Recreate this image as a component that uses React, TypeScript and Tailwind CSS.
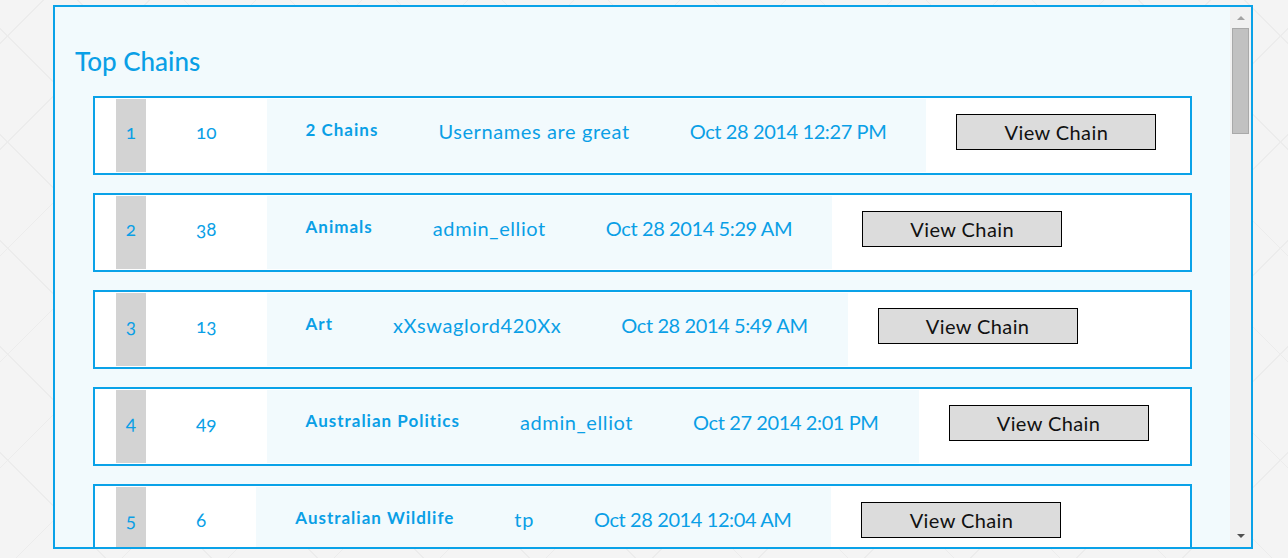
import React from 'react';

type Chain = {
  rank: number;
  links: number;
  name: string;
  author: string;
  created: string;
};

const chains: Chain[] = [
  { rank: 1, links: 10, name: '2 Chains', author: 'Usernames are great', created: 'Oct 28 2014 12:27 PM' },
  { rank: 2, links: 38, name: 'Animals', author: 'admin_elliot', created: 'Oct 28 2014 5:29 AM' },
  { rank: 3, links: 13, name: 'Art', author: 'xXswaglord420Xx', created: 'Oct 28 2014 5:49 AM' },
  { rank: 4, links: 49, name: 'Australian Politics', author: 'admin_elliot', created: 'Oct 27 2014 2:01 PM' },
  { rank: 5, links: 6, name: 'Australian Wildlife', author: 'tp', created: 'Oct 28 2014 12:04 AM' },
];

function ChainRow({ chain }: { chain: Chain }) {
  return (
    <div className="h-[79px] shrink-0 border-2 border-[#0aa2e8] bg-white pl-[21px] py-[1px] flex items-stretch text-[#0a9fe6]">
      {/* Rank */}
      <div className="w-[30px] bg-[#d3d3d3] flex items-center justify-center pb-[7px] text-[19px] [font-variant-numeric:oldstyle-nums]">
        {chain.rank}
      </div>
      {/* Links */}
      <div className="px-[50px] flex items-center justify-center pb-[7px] text-[19px] [font-variant-numeric:oldstyle-nums]">
        {chain.links}
      </div>
      {/* Details */}
      <div className="bg-[#f2fafd] flex items-stretch">
        <div className="pl-[39px] pr-[30px] flex items-center pb-[11px] text-[17px] font-bold tracking-[1px] whitespace-nowrap">
          {chain.name}
        </div>
        <div className="px-[30px] flex items-center pb-[9px] text-[20px] tracking-[0.6px] whitespace-nowrap">
          {chain.author}
        </div>
        <div className="pl-[30px] pr-[40px] flex items-center pb-[9px] text-[20px] tracking-[-0.4px] whitespace-nowrap">
          {chain.created}
        </div>
      </div>
      {/* Action */}
      <div className="pl-[30px] flex items-center pb-[8px]">
        <button className="w-[200px] h-[36px] border border-black bg-[#dcdcdc] text-[20px] tracking-[0.4px] text-[#111]">
          View Chain
        </button>
      </div>
    </div>
  );
}

export default function App() {
  return (
    <div
      className="w-[1288px] h-[558px] overflow-hidden pt-[5px] pl-[53px] bg-[#f4f4f4] bg-[repeating-linear-gradient(45deg,transparent_0,transparent_74px,#ececec_74px,#ececec_75px),repeating-linear-gradient(-45deg,transparent_0,transparent_74px,#ececec_74px,#ececec_75px)]"
      style={{ fontFamily: 'Lato, "Liberation Sans", sans-serif' }}
    >
      <div className="w-[1200px] h-[544px] border-2 border-[#0aa2e8] bg-[#f2fafd] flex">
        {/* Content */}
        <div className="flex-1 overflow-hidden">
          <h2 className="pl-[20px] pt-[39px] text-[26px] leading-[31px] font-medium text-[#0a9fe6]">Top Chains</h2>
          <div className="mt-[19px] px-[38px] flex flex-col gap-[18px]">
            {chains.map((c) => (
              <ChainRow key={c.rank} chain={c} />
            ))}
          </div>
        </div>

        {/* Scrollbar */}
        <div className="w-[21px] bg-[#f1f1f1] flex flex-col items-center pt-[9px] pb-[9px]">
          <svg width="8" height="4" viewBox="0 0 8 4" className="shrink-0">
            <path d="M0 4 L4 0 L8 4 Z" fill="#a3a3a3" />
          </svg>
          <div className="mt-[8px] w-[17px] h-[106px] bg-[#c1c1c1] border border-[#a9a9a9]" />
          <div className="flex-1" />
          <svg width="8" height="4" viewBox="0 0 8 4" className="shrink-0">
            <path d="M0 0 L8 0 L4 4 Z" fill="#505050" />
          </svg>
        </div>
      </div>
    </div>
  );
}
